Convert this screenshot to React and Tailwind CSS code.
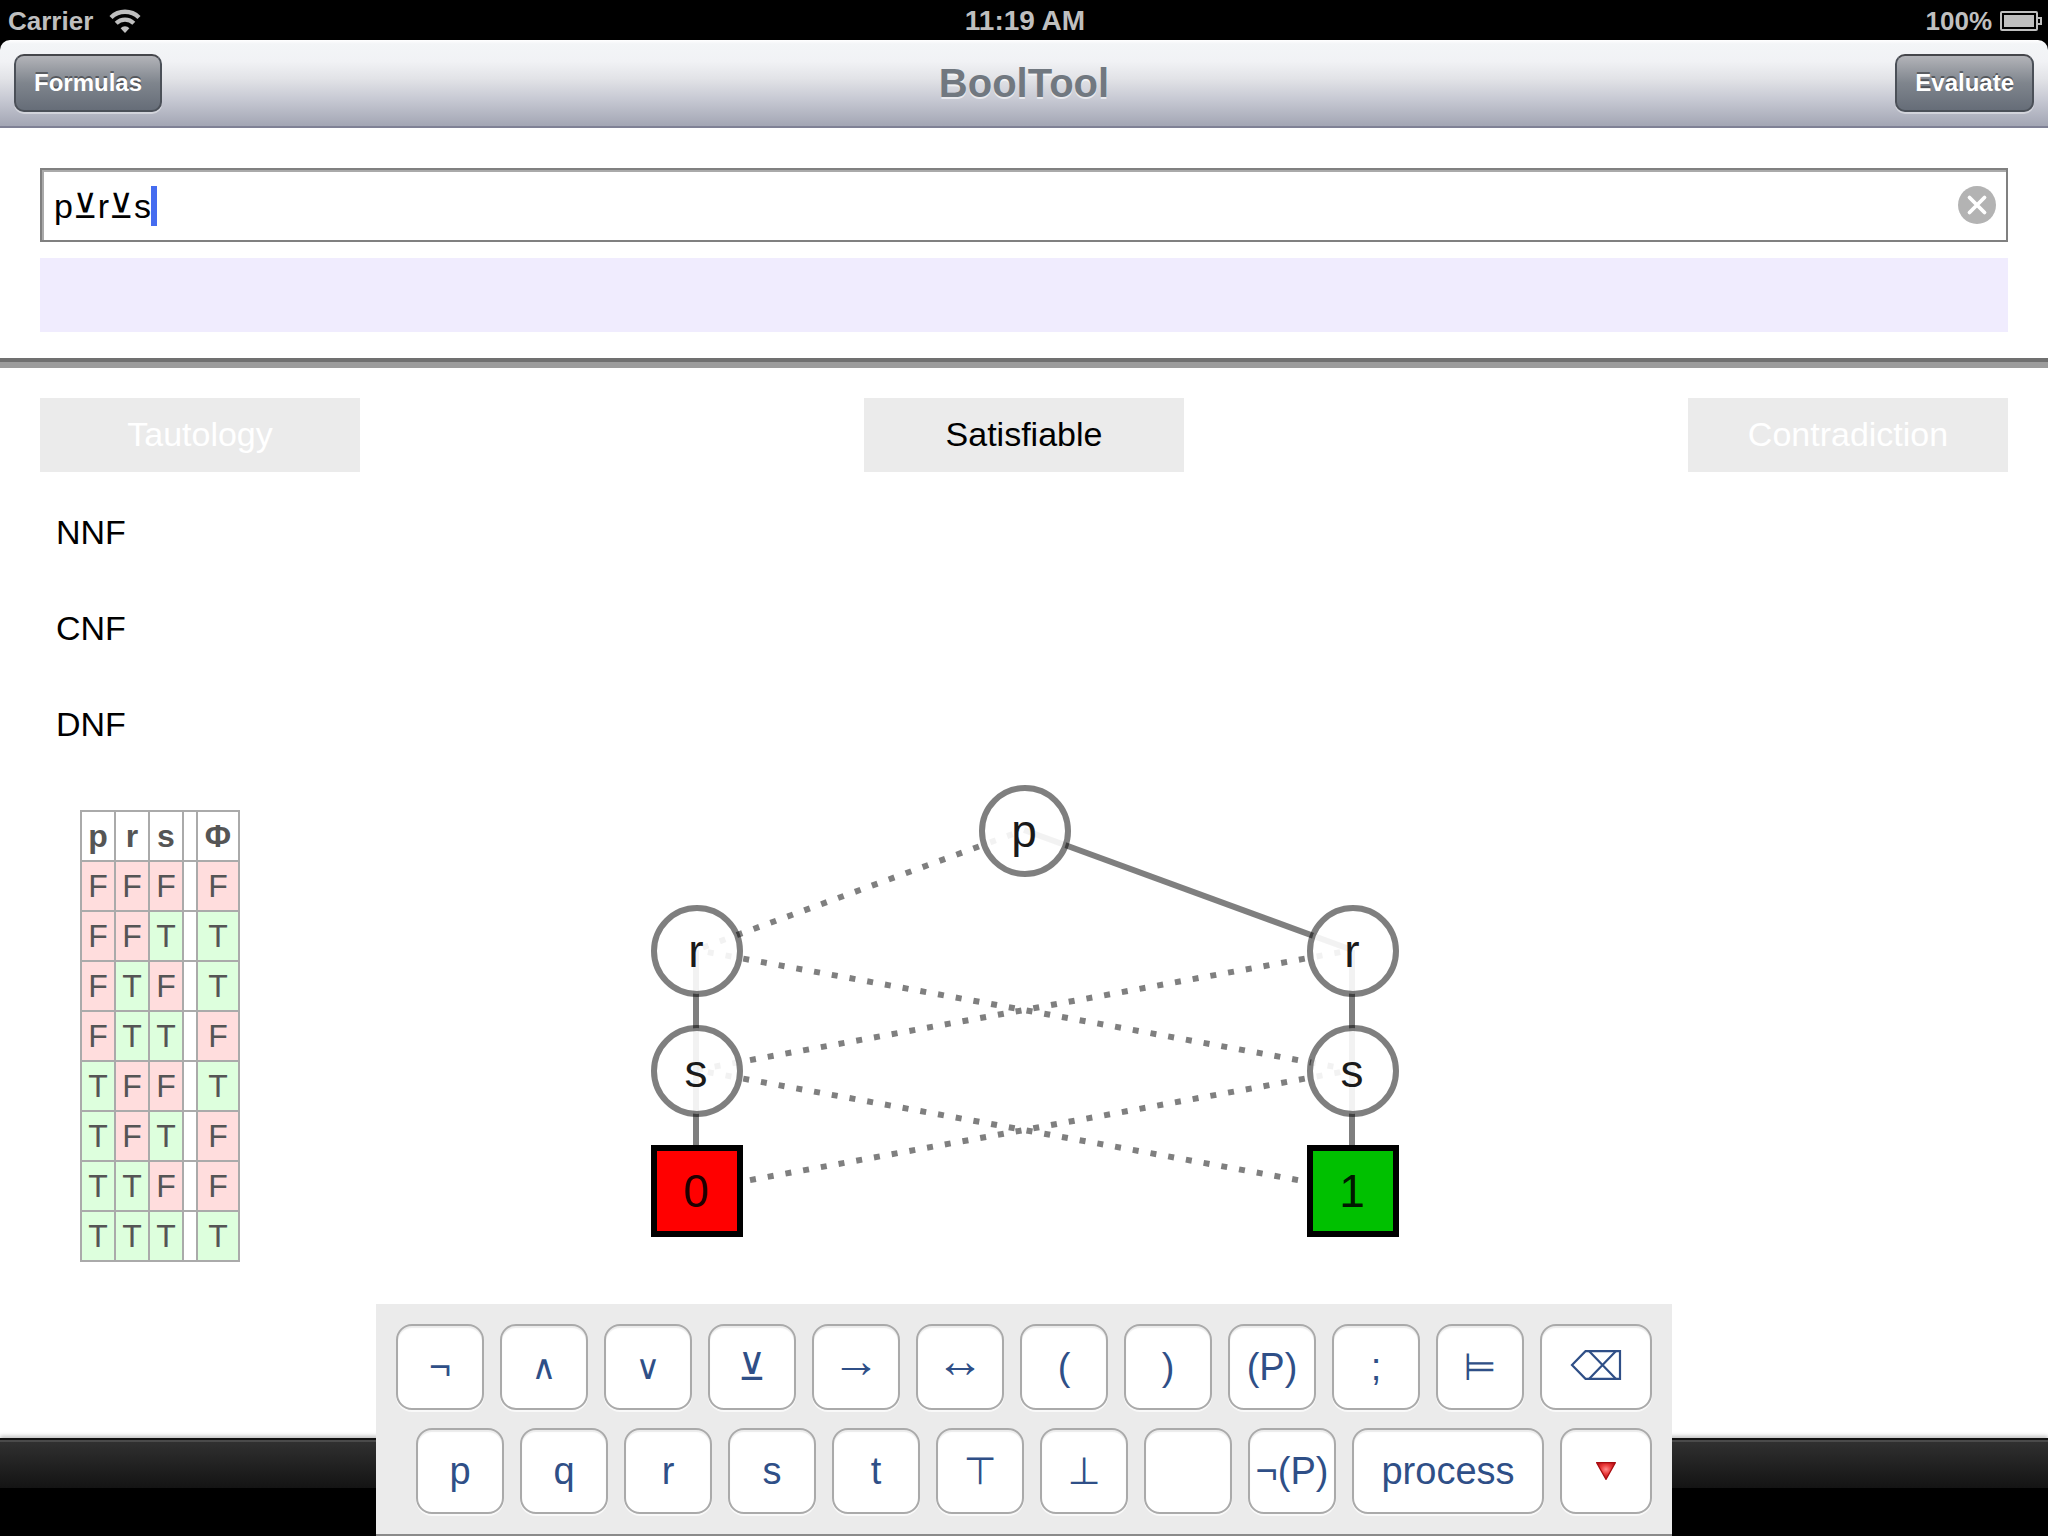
const SANS = "font-['Liberation_Sans','DejaVu_Sans',sans-serif]";

const variables = ["p", "r", "s"];
const truthRows = ["FFFF", "FFTT", "FTFT", "FTTF", "TFFT", "TFTF", "TTFF", "TTTT"];

function WifiIcon() {
  return (
    <svg className="h-6 w-8" viewBox="0 0 32 24" fill="none" stroke="#bfbfbf" aria-hidden="true">
      <path d="M2 8.5A20 20 0 0 1 30 8.5" strokeWidth="4.4" />
      <path d="M7.2 14.2A12.5 12.5 0 0 1 24.8 14.2" strokeWidth="4.2" />
      <path d="M16 24L11.6 19.2A6 6 0 0 1 20.4 19.2Z" fill="#bfbfbf" stroke="none" />
    </svg>
  );
}

function BatteryIcon() {
  return (
    <svg className="h-5 w-[42px]" viewBox="0 0 42 20" aria-hidden="true">
      <rect x="1" y="1" width="36" height="18" rx="1" fill="none" stroke="#bfbfbf" strokeWidth="2" />
      <rect x="4" y="4" width="30" height="12" fill="#bfbfbf" />
      <path d="M38 7H41V13H38" fill="none" stroke="#bfbfbf" strokeWidth="2" />
    </svg>
  );
}

function StatusBar() {
  return (
    <div className="grid h-10 grid-cols-3 items-center bg-black pr-1.5 pb-1 pl-2 text-[26px] font-bold text-[#bfbfbf]">
      <div className="flex items-center gap-4">
        <span>Carrier</span>
        <WifiIcon />
      </div>
      <div className="text-center text-[28px]">11:19 AM</div>
      <div className="flex items-center justify-end gap-2">
        <span>100%</span>
        <BatteryIcon />
      </div>
    </div>
  );
}

function BarButton({ children }) {
  return (
    <button
      type="button"
      className="h-[58px] rounded-[10px] border-2 border-[#4b5058] border-t-[#45464b] bg-linear-to-b from-[#b3b4b9] via-[#7f858d] to-[#666d78] px-[18px] text-2xl font-bold text-white shadow-[0_2px_0_rgba(255,255,255,0.4)] text-shadow-[0_-2px_0_rgba(0,0,0,0.4)]"
    >
      {children}
    </button>
  );
}

function NavBar() {
  return (
    <div className="bg-black">
      <header className="grid h-[88px] grid-cols-[1fr_auto_1fr] items-center rounded-t-[10px] border-b-2 border-[#7f8195] bg-[linear-gradient(#ffffff_0,#f3f5f7_4px,#f1f2f5_25%,#e2e3e7_45%,#c8cad4_68%,#a3a6b4_100%)] px-3.5">
        <div>
          <BarButton>Formulas</BarButton>
        </div>
        <h1 className="text-[40px] font-bold text-[#717880] text-shadow-[0_2px_0_rgba(255,255,255,0.6)]">BoolTool</h1>
        <div className="text-right">
          <BarButton>Evaluate</BarButton>
        </div>
      </header>
    </div>
  );
}

function FormulaField() {
  const value = "p⊻r⊻s";
  return (
    <div className="relative h-[74px] border-2 border-[#808080] bg-white text-[34px] text-black shadow-[inset_2px_2px_0_#aaaaaa]">
      <input
        aria-label="Formula"
        defaultValue={value}
        className="h-full w-full bg-transparent px-3 pt-0.5 outline-none"
      />
      <div className="pointer-events-none absolute inset-0 flex items-center px-3 pt-0.5" aria-hidden="true">
        <span className="invisible">{value}</span>
        <span className="h-10 w-1.5 bg-[#456cf0]" />
      </div>
      <button type="button" aria-label="Clear formula" className="absolute inset-y-0 right-2.5">
        <svg className="size-[38px]" viewBox="0 0 38 38">
          <circle cx="19" cy="19" r="19" fill="#b3b3b3" />
          <path d="M11.500 11.500L26.500 26.500M26.500 11.500L11.500 26.500" stroke="#fff" strokeWidth="3.8" strokeLinecap="round" />
        </svg>
      </button>
    </div>
  );
}

function Verdict({ active, children }) {
  return (
    <div
      className={
        active
          ? "flex h-[74px] w-80 items-center justify-center bg-[#ebebeb] pb-0.5 text-black"
          : "flex h-[74px] w-80 items-center justify-center bg-[#ebebeb] pb-0.5 text-white"
      }
    >
      {children}
    </div>
  );
}

function Cell({ value }) {
  return (
    <td
      className={
        value === "T"
          ? "border-2 border-[#aaaaaa] bg-[#ddffdd] p-0"
          : "border-2 border-[#aaaaaa] bg-[#ffdddd] p-0"
      }
    >
      {value}
    </td>
  );
}

function TruthTable() {
  return (
    <table className="w-40 table-fixed border-collapse text-center text-[32px] leading-[48px] text-[#555555]">
      <colgroup>
        <col className="w-[34px]" />
        <col className="w-[34px]" />
        <col className="w-[34px]" />
        <col className="w-3.5" />
        <col className="w-[42px]" />
      </colgroup>
      <thead>
        <tr>
          {variables.map((name) => (
            <th key={name} scope="col" className="border-2 border-[#aaaaaa] p-0">
              {name}
            </th>
          ))}
          <td className="border-2 border-[#aaaaaa] p-0" />
          <th scope="col" className="border-2 border-[#aaaaaa] p-0">Φ</th>
        </tr>
      </thead>
      <tbody>
        {truthRows.map((row) => (
          <tr key={row}>
            <Cell value={row[0]} />
            <Cell value={row[1]} />
            <Cell value={row[2]} />
            <td className="border-2 border-[#aaaaaa] p-0" />
            <Cell value={row[3]} />
          </tr>
        ))}
      </tbody>
    </table>
  );
}

const solidEdges = [
  [375, 46, 703, 166],
  [47, 166, 47, 286],
  [703, 166, 703, 286],
  [47, 286, 47, 406],
  [703, 286, 703, 406],
];
const dottedEdges = [
  [375, 46, 47, 166],
  [47, 166, 703, 286],
  [703, 166, 47, 286],
  [47, 286, 703, 406],
  [703, 286, 47, 406],
];
const circles = [
  ["p", 376, 47],
  ["r", 48, 167],
  ["r", 704, 167],
  ["s", 48, 287],
  ["s", 704, 287],
];
const leaves = [
  ["0", 48, 407, "#ff0000"],
  ["1", 704, 407, "#00c000"],
];

function DecisionDiagram() {
  return (
    <svg className="h-[454px] w-[750px]" viewBox="0 0 750 454" role="img" aria-label="Decision diagram">
      <g stroke="#000" strokeOpacity="0.5" strokeWidth="6">
        {solidEdges.map(([x1, y1, x2, y2]) => (
          <line key={`${x1}-${y1}-${x2}`} x1={x1} y1={y1} x2={x2} y2={y2} />
        ))}
        {dottedEdges.map(([x1, y1, x2, y2]) => (
          <line key={`${x1}-${y1}-${x2}`} x1={x1} y1={y1} x2={x2} y2={y2} strokeDasharray="6 12" strokeDashoffset="6" />
        ))}
      </g>
      {circles.map(([label, x, y]) => (
        <g key={`${x}-${y}`}>
          <circle cx={x} cy={y} r="43" fill="#fff" fillOpacity="0.9" stroke="#000" strokeOpacity="0.5" strokeWidth="6" />
          <text x={x - 1} y={y + 16} textAnchor="middle" fontSize="46" fill="#1a1a1a">
            {label}
          </text>
        </g>
      ))}
      {leaves.map(([label, x, y, fill]) => (
        <g key={label}>
          <rect x={x - 43} y={y - 43} width="86" height="86" fill={fill} stroke="#000" strokeWidth="6" />
          <text x={x - 1} y={y + 16} textAnchor="middle" fontSize="46" fill="#000" fillOpacity="0.9">
            {label}
          </text>
        </g>
      ))}
    </svg>
  );
}

const KEY =
  "flex h-[86px] items-center justify-center rounded-2xl border-2 border-[#aaaaaa] bg-white text-[38px] whitespace-nowrap text-[#2f4f87] shadow-[inset_0_2px_1px_rgba(0,0,0,0.08),0_2px_0_rgba(255,255,255,0.7)]";

function Key({ size = "w-[88px]", label, children }) {
  return (
    <button type="button" aria-label={label} className={`${KEY} ${size}`}>
      {children}
    </button>
  );
}

function BackspaceIcon() {
  return (
    <svg className="h-[30px] w-[52px]" viewBox="0 0 52 30" fill="none" stroke="#2f4f87" strokeWidth="2.2" aria-hidden="true">
      <path d="M2 15L15.500 1.200H50V28.800H15.500Z" />
      <path d="M19 1L46 29M46 1L19 29" />
    </svg>
  );
}

function HideIcon() {
  return (
    <svg className="h-[18px] w-5" viewBox="0 0 20 18" aria-hidden="true">
      <defs>
        <radialGradient id="hide" cx="0.5" cy="0.4" r="0.55">
          <stop offset="0" stopColor="#ff8a8a" />
          <stop offset="0.5" stopColor="#ea3a3a" />
          <stop offset="1" stopColor="#b80f14" />
        </radialGradient>
      </defs>
      <path d="M0.600 0.600H19.400L10 17.400Z" fill="url(#hide)" stroke="#a80c10" strokeWidth="1.2" strokeLinejoin="round" />
    </svg>
  );
}

function Keyboard() {
  return (
    <div className="absolute bottom-0 left-1/2 flex -translate-x-1/2 flex-col gap-[18px] border-b-2 border-[#8a8a8a] bg-[#ebebeb] p-5">
      <div className="flex gap-4">
        <Key>¬</Key>
        <Key><span className="text-[34px]">∧</span></Key>
        <Key><span className="text-[34px]">∨</span></Key>
        <Key>⊻</Key>
        <Key><span className="pb-3 text-5xl">→</span></Key>
        <Key><span className="pb-3 text-5xl">↔</span></Key>
        <Key>(</Key>
        <Key>)</Key>
        <Key>(P)</Key>
        <Key>;</Key>
        <Key>⊨</Key>
        <Key size="w-28" label="Delete"><span className="pb-1"><BackspaceIcon /></span></Key>
      </div>
      <div className="flex gap-4 pl-5">
        <Key>p</Key>
        <Key>q</Key>
        <Key>r</Key>
        <Key>s</Key>
        <Key>t</Key>
        <Key>⊤</Key>
        <Key>⊥</Key>
        <Key label="Space" />
        <Key>¬(P)</Key>
        <Key size="w-48">process</Key>
        <Key size="w-[92px]" label="Hide keyboard"><HideIcon /></Key>
      </div>
    </div>
  );
}

export default function App() {
  return (
    <div className={`relative flex min-h-screen flex-col overflow-hidden bg-white ${SANS}`}>
      <StatusBar />
      <NavBar />
      <section className="flex flex-col gap-4 px-10 pt-10 pb-[26px]">
        <FormulaField />
        <output aria-label="Result" className="block h-[74px] bg-[#f0ecfe]" />
      </section>
      <div className="h-2.5 border-t-4 border-[#707070] bg-[#9c9c9c]" />
      <main className="flex-1 px-10 pt-[30px] text-[34px] text-black">
        <div className="flex justify-between">
          <Verdict>Tautology</Verdict>
          <Verdict active>Satisfiable</Verdict>
          <Verdict>Contradiction</Verdict>
        </div>
        <div className="flex flex-col pt-3 pl-4 leading-[96px]">
          <div>NNF</div>
          <div>CNF</div>
          <div>DNF</div>
        </div>
        <div className="grid grid-cols-[1fr_auto_1fr] pt-3">
          <div className="pt-[26px] pl-10">
            <TruthTable />
          </div>
          <DecisionDiagram />
        </div>
      </main>
      <footer className="h-[98px] border-t-2 border-[#111111] bg-black shadow-[0_-2px_4px_rgba(0,0,0,0.25)]">
        <div className="h-12 border-t-2 border-[#4a4a4a] bg-linear-to-b from-[#303030] to-[#141414]" />
      </footer>
      <Keyboard />
    </div>
  );
}
